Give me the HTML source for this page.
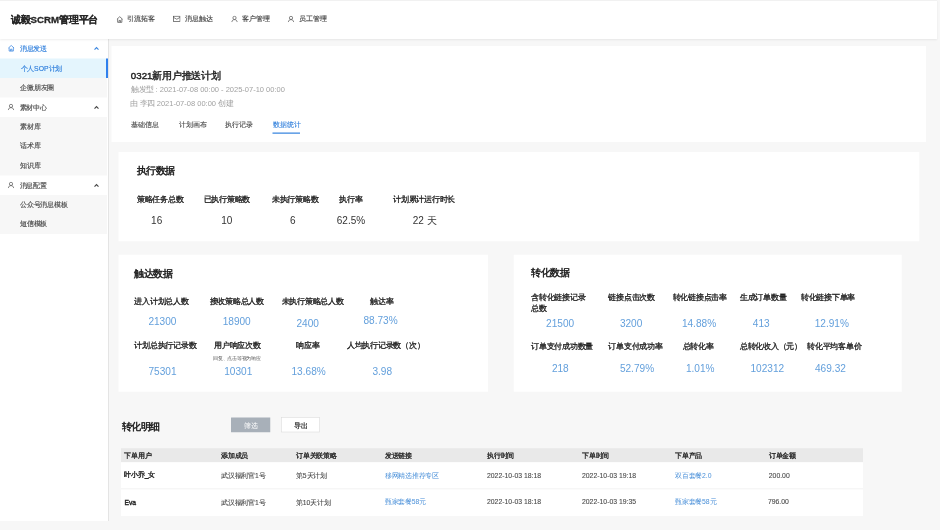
<!DOCTYPE html><html><head><meta charset="utf-8"><style>
*{margin:0;padding:0;box-sizing:border-box}
html,body{width:940px;height:530px;overflow:hidden;background:#f7f7f7}
#root{position:absolute;left:0;top:0;width:3760px;height:2120px;transform:scale(0.25);transform-origin:0 0;font-family:"Liberation Sans",sans-serif}
.r{position:absolute}.t{position:absolute;white-space:nowrap;line-height:1}
</style></head><body><div id="wrap" style="position:absolute;left:0;top:0;width:940px;height:530px;filter:blur(0.3px)"><div id="root">
<div class="r" style="left:0px;top:156px;width:432px;height:1928px;background:#fff"></div>
<div class="r" style="left:432px;top:156px;width:4px;height:1928px;background:#e4e4e4"></div>
<div class="r" style="left:0px;top:234px;width:424px;height:78px;background:#e4f5fd"></div>
<div class="r" style="left:424px;top:234px;width:8px;height:78px;background:#2f80ed"></div>
<div class="r" style="left:0px;top:312px;width:428px;height:78px;background:#f7f7f7"></div>
<div class="r" style="left:0px;top:468px;width:428px;height:234px;background:#f7f7f7"></div>
<div class="r" style="left:0px;top:780px;width:428px;height:156px;background:#f7f7f7"></div>
<div class="r" style="left:0px;top:0px;width:3748px;height:156px;background:#fff;box-shadow:0 4px 8px rgba(0,0,0,0.07)"></div>
<div class="r" style="left:0px;top:0px;width:3748px;height:3px;background:#ececec"></div>
<div class="r" style="left:446px;top:184px;width:3258px;height:384px;background:#fff"></div>
<div class="r" style="left:1090.4px;top:530.4px;width:109.6px;height:4.8px;background:#3a86e0"></div>
<div class="r" style="left:474px;top:608px;width:3202.8px;height:357.2px;background:#fff"></div>
<div class="r" style="left:474px;top:1019.2px;width:1478.4px;height:548px;background:#fff"></div>
<div class="r" style="left:2054.8px;top:1018.8px;width:1552.4px;height:548.4px;background:#fff"></div>
<div class="r" style="left:923.6px;top:1670px;width:157.2px;height:58.8px;background:#a8b0b9;border-radius:1px"></div>
<div class="r" style="left:1124px;top:1668px;width:154.8px;height:60.8px;background:#fff;border:2.4px solid #d6d6d6;border-radius:1px"></div>
<div class="r" style="left:484px;top:1793.2px;width:2968px;height:56px;background:#e9e9e9"></div>
<div class="r" style="left:484px;top:1849.2px;width:2968px;height:214.4px;background:#fff"></div>
<div class="r" style="left:484px;top:1954px;width:2968px;height:3.2px;background:#eee"></div>
<svg class="r" style="left:464px;top:63.2px" width="30" height="30" viewBox="0 0 16 16"><path d="M2 7.5L8 2l6 5.5M3.5 6.5V14h9V6.5M6.5 14v-4h3v4" fill="none" stroke="#555" stroke-width="1.6" stroke-linejoin="round"/></svg>
<svg class="r" style="left:692px;top:62px" width="30" height="30" viewBox="0 0 16 16"><rect x="1" y="1.5" width="14" height="11" fill="none" stroke="#555" stroke-width="1.6"/><path d="M1 4l7 4 7-4" fill="none" stroke="#555" stroke-width="1.6"/></svg>
<svg class="r" style="left:924px;top:62px" width="28" height="28" viewBox="0 0 16 16"><circle cx="8" cy="5.5" r="3.7" fill="none" stroke="#555" stroke-width="1.6"/><path d="M2 15c0-3.6 2.7-5.6 6-5.6s6 2 6 5.6" fill="none" stroke="#555" stroke-width="1.6"/></svg>
<svg class="r" style="left:1150px;top:62px" width="28" height="28" viewBox="0 0 16 16"><circle cx="8" cy="5.5" r="3.7" fill="none" stroke="#555" stroke-width="1.6"/><path d="M2 15c0-3.6 2.7-5.6 6-5.6s6 2 6 5.6" fill="none" stroke="#555" stroke-width="1.6"/></svg>
<svg class="r" style="left:30px;top:178px" width="30" height="30" viewBox="0 0 16 16"><path d="M2 7.5L8 2l6 5.5M3.5 6.5V14h9V6.5M6.5 14v-4h3v4" fill="none" stroke="#3a86e0" stroke-width="1.6" stroke-linejoin="round"/></svg>
<svg class="r" style="left:30px;top:414px" width="28" height="28" viewBox="0 0 16 16"><circle cx="8" cy="5.5" r="3.7" fill="none" stroke="#555" stroke-width="1.6"/><path d="M2 15c0-3.6 2.7-5.6 6-5.6s6 2 6 5.6" fill="none" stroke="#555" stroke-width="1.6"/></svg>
<svg class="r" style="left:30px;top:726px" width="28" height="28" viewBox="0 0 16 16"><circle cx="8" cy="5.5" r="3.7" fill="none" stroke="#555" stroke-width="1.6"/><path d="M2 15c0-3.6 2.7-5.6 6-5.6s6 2 6 5.6" fill="none" stroke="#555" stroke-width="1.6"/></svg>
<svg class="r" style="left:372px;top:180px" width="28" height="28" viewBox="0 0 16 16"><path d="M3.5 10.5L8 6l4.5 4.5" fill="none" stroke="#3a86e0" stroke-width="2.6"/></svg>
<svg class="r" style="left:372px;top:416px" width="28" height="28" viewBox="0 0 16 16"><path d="M3.5 10.5L8 6l4.5 4.5" fill="none" stroke="#444" stroke-width="2.6"/></svg>
<svg class="r" style="left:372px;top:728px" width="28" height="28" viewBox="0 0 16 16"><path d="M3.5 10.5L8 6l4.5 4.5" fill="none" stroke="#444" stroke-width="2.6"/></svg>
<div class="t" id="t0" style="left:44px;top:59px;font-size:38.8px;color:#262626;-webkit-text-stroke:1.2px #262626;font-weight:bold">诚毅SCRM管理平台</div>
<div class="t" id="t1" style="left:507.52px;top:60.2px;font-size:28.4px;color:#4a4a4a;-webkit-text-stroke:0.6px #4a4a4a">引流拓客</div>
<div class="t" id="t2" style="left:739.12px;top:60.2px;font-size:28.4px;color:#4a4a4a;-webkit-text-stroke:0.6px #4a4a4a">消息触达</div>
<div class="t" id="t3" style="left:968px;top:60.2px;font-size:28.4px;color:#4a4a4a;-webkit-text-stroke:0.6px #4a4a4a">客户管理</div>
<div class="t" id="t4" style="left:1196px;top:60.2px;font-size:28.4px;color:#4a4a4a;-webkit-text-stroke:0.6px #4a4a4a">员工管理</div>
<div class="t" id="t5" style="left:79.96px;top:180px;font-size:27.4px;color:#2f7fdc;-webkit-text-stroke:0.6px #2f7fdc">消息发送</div>
<div class="t" id="t6" style="left:82.4px;top:259.8px;font-size:27.4px;color:#2f7fdc;-webkit-text-stroke:0.6px #2f7fdc">个人SOP计划</div>
<div class="t" id="t7" style="left:81.72px;top:336px;font-size:27.4px;color:#4a4a4a;-webkit-text-stroke:0.6px #4a4a4a">企微朋友圈</div>
<div class="t" id="t8" style="left:78.6px;top:415.8px;font-size:27.4px;color:#4a4a4a;-webkit-text-stroke:0.6px #4a4a4a">素材中心</div>
<div class="t" id="t9" style="left:80.16px;top:493.8px;font-size:27.4px;color:#4a4a4a;-webkit-text-stroke:0.6px #4a4a4a">素材库</div>
<div class="t" id="t10" style="left:80.16px;top:570px;font-size:27.4px;color:#4a4a4a;-webkit-text-stroke:0.6px #4a4a4a">话术库</div>
<div class="t" id="t11" style="left:80.16px;top:649.8px;font-size:27.4px;color:#4a4a4a;-webkit-text-stroke:0.6px #4a4a4a">知识库</div>
<div class="t" id="t12" style="left:78.6px;top:727.8px;font-size:27.4px;color:#4a4a4a;-webkit-text-stroke:0.6px #4a4a4a">消息配置</div>
<div class="t" id="t13" style="left:80.16px;top:804px;font-size:27.4px;color:#4a4a4a;-webkit-text-stroke:0.6px #4a4a4a">公众号消息模板</div>
<div class="t" id="t14" style="left:80.16px;top:882px;font-size:27.4px;color:#4a4a4a;-webkit-text-stroke:0.6px #4a4a4a">短信模板</div>
<div class="t" id="t15" style="left:523.32px;top:285.42px;font-size:38.88px;color:#1f1f1f;-webkit-text-stroke:1.68px #1f1f1f">0321新用户推送计划</div>
<div class="t" id="t16" style="left:524px;top:344.48px;font-size:30px;color:#a2a2a2">触发型 : 2021-07-08 00:00 - 2025-07-10 00:00</div>
<div class="t" id="t17" style="left:520.4px;top:397.6px;font-size:30px;color:#a2a2a2">由 李四 2021-07-08 00:00 创建</div>
<div class="t" id="t18" style="left:524px;top:482.64px;font-size:28.4px;color:#4a4a4a;-webkit-text-stroke:0.48px #4a4a4a">基础信息</div>
<div class="t" id="t19" style="left:715.12px;top:482.64px;font-size:28.4px;color:#4a4a4a;-webkit-text-stroke:0.48px #4a4a4a">计划画布</div>
<div class="t" id="t20" style="left:900px;top:482.64px;font-size:28.4px;color:#4a4a4a;-webkit-text-stroke:0.48px #4a4a4a">执行记录</div>
<div class="t" id="t21" style="left:1091.12px;top:482.64px;font-size:28.4px;color:#2f7fdc;-webkit-text-stroke:0.48px #2f7fdc">数据统计</div>
<div class="t" id="t22" style="left:547.32px;top:664.16px;font-size:38.4px;color:#1a1a1a;-webkit-text-stroke:1.8px #1a1a1a">执行数据</div>
<div class="t" id="t23" style="left:547.32px;top:782.32px;font-size:31px;color:#222;-webkit-text-stroke:1.2px #222">策略任务总数</div>
<div class="t" id="t24" style="left:814.24px;top:782.32px;font-size:31px;color:#222;-webkit-text-stroke:1.2px #222">已执行策略数</div>
<div class="t" id="t25" style="left:1087.12px;top:782.32px;font-size:31px;color:#222;-webkit-text-stroke:1.2px #222">未执行策略数</div>
<div class="t" id="t26" style="left:1357.56px;top:782.32px;font-size:31px;color:#222;-webkit-text-stroke:1.2px #222">执行率</div>
<div class="t" id="t27" style="left:1572.88px;top:782.32px;font-size:31px;color:#222;-webkit-text-stroke:1.2px #222">计划累计运行时长</div>
<div class="t" id="t28" style="left:604.4px;top:860.6px;font-size:40px;color:#333">16</div>
<div class="t" id="t29" style="left:884.88px;top:860.6px;font-size:40px;color:#333">10</div>
<div class="t" id="t30" style="left:1160px;top:860.6px;font-size:40px;color:#333">6</div>
<div class="t" id="t31" style="left:1347.12px;top:860.6px;font-size:40px;color:#333">62.5%</div>
<div class="t" id="t32" style="left:1651.12px;top:860.6px;font-size:40px;color:#333">22 天</div>
<div class="t" id="t33" style="left:537.76px;top:1074.8px;font-size:38.4px;color:#1a1a1a;-webkit-text-stroke:1.8px #1a1a1a">触达数据</div>
<div class="t" id="t34" style="left:537.76px;top:1189.64px;font-size:31px;color:#222;-webkit-text-stroke:1.2px #222">进入计划总人数</div>
<div class="t" id="t35" style="left:838.24px;top:1189.64px;font-size:31px;color:#222;-webkit-text-stroke:1.2px #222">接收策略总人数</div>
<div class="t" id="t36" style="left:1126.24px;top:1189.64px;font-size:31px;color:#222;-webkit-text-stroke:1.2px #222">未执行策略总人数</div>
<div class="t" id="t37" style="left:1480.68px;top:1189.64px;font-size:31px;color:#222;-webkit-text-stroke:1.2px #222">触达率</div>
<div class="t" id="t38" style="left:593.56px;top:1265.48px;font-size:40.4px;color:#64a0dc">21300</div>
<div class="t" id="t39" style="left:890.64px;top:1265.48px;font-size:40.4px;color:#64a0dc">18900</div>
<div class="t" id="t40" style="left:1185.76px;top:1272.76px;font-size:40.4px;color:#64a0dc">2400</div>
<div class="t" id="t41" style="left:1453.76px;top:1262.68px;font-size:40.4px;color:#64a0dc">88.73%</div>
<div class="t" id="t42" style="left:537.76px;top:1367.12px;font-size:31px;color:#222;-webkit-text-stroke:1.2px #222">计划总执行记录数</div>
<div class="t" id="t43" style="left:856.68px;top:1364.76px;font-size:31px;color:#222;-webkit-text-stroke:1.2px #222">用户响应次数</div>
<div class="t" id="t44" style="left:852.68px;top:1423.04px;font-size:19.2px;color:#555">回复、点击等视为响应</div>
<div class="t" id="t45" style="left:1184.88px;top:1367.12px;font-size:31px;color:#222;-webkit-text-stroke:1.2px #222">响应率</div>
<div class="t" id="t46" style="left:1387.12px;top:1367.12px;font-size:31px;color:#222;-webkit-text-stroke:1.2px #222">人均执行记录数（次）</div>
<div class="t" id="t47" style="left:593.76px;top:1467.04px;font-size:40.4px;color:#64a0dc">75301</div>
<div class="t" id="t48" style="left:896.88px;top:1467.04px;font-size:40.4px;color:#64a0dc">10301</div>
<div class="t" id="t49" style="left:1165.96px;top:1467.04px;font-size:40.4px;color:#64a0dc">13.68%</div>
<div class="t" id="t50" style="left:1489.56px;top:1467.04px;font-size:40.4px;color:#64a0dc">3.98</div>
<div class="t" id="t51" style="left:2124px;top:1072.16px;font-size:38.4px;color:#1a1a1a;-webkit-text-stroke:1.8px #1a1a1a">转化数据</div>
<div class="t" id="t52" style="left:2124px;top:1175.2px;font-size:31px;color:#222;-webkit-text-stroke:1.2px #222">含转化链接记录</div>
<div class="t" id="t53" style="left:2124px;top:1219.2px;font-size:31px;color:#222;-webkit-text-stroke:1.2px #222">总数</div>
<div class="t" id="t54" style="left:2433.76px;top:1175.2px;font-size:31px;color:#222;-webkit-text-stroke:1.2px #222">链接点击次数</div>
<div class="t" id="t55" style="left:2690.24px;top:1175.2px;font-size:31px;color:#222;-webkit-text-stroke:1.2px #222">转化链接点击率</div>
<div class="t" id="t56" style="left:2959.12px;top:1175.2px;font-size:31px;color:#222;-webkit-text-stroke:1.2px #222">生成订单数量</div>
<div class="t" id="t57" style="left:3203.32px;top:1175.2px;font-size:31px;color:#222;-webkit-text-stroke:1.2px #222">转化链接下单率</div>
<div class="t" id="t58" style="left:2184.2px;top:1272.36px;font-size:40.4px;color:#64a0dc">21500</div>
<div class="t" id="t59" style="left:2479.52px;top:1272.36px;font-size:40.4px;color:#64a0dc">3200</div>
<div class="t" id="t60" style="left:2727.52px;top:1271.56px;font-size:40.4px;color:#64a0dc">14.88%</div>
<div class="t" id="t61" style="left:3011.32px;top:1271.56px;font-size:40.4px;color:#64a0dc">413</div>
<div class="t" id="t62" style="left:3258.64px;top:1271.56px;font-size:40.4px;color:#64a0dc">12.91%</div>
<div class="t" id="t63" style="left:2124px;top:1367.92px;font-size:31px;color:#222;-webkit-text-stroke:1.2px #222">订单支付成功数量</div>
<div class="t" id="t64" style="left:2433.76px;top:1367.92px;font-size:31px;color:#222;-webkit-text-stroke:1.2px #222">订单支付成功率</div>
<div class="t" id="t65" style="left:2730.24px;top:1368.72px;font-size:31px;color:#222;-webkit-text-stroke:1.2px #222">总转化率</div>
<div class="t" id="t66" style="left:2959.12px;top:1368.72px;font-size:31px;color:#222;-webkit-text-stroke:1.2px #222">总转化收入（元）</div>
<div class="t" id="t67" style="left:3228px;top:1368.72px;font-size:31px;color:#222;-webkit-text-stroke:1.2px #222">转化平均客单价</div>
<div class="t" id="t68" style="left:2207.52px;top:1452.6px;font-size:40.4px;color:#64a0dc">218</div>
<div class="t" id="t69" style="left:2479.52px;top:1452.6px;font-size:40.4px;color:#64a0dc">52.79%</div>
<div class="t" id="t70" style="left:2743.52px;top:1452.6px;font-size:40.4px;color:#64a0dc">1.01%</div>
<div class="t" id="t71" style="left:3001.96px;top:1452.6px;font-size:40.4px;color:#64a0dc">102312</div>
<div class="t" id="t72" style="left:3260px;top:1452.6px;font-size:40.4px;color:#64a0dc">469.32</div>
<div class="t" id="t73" style="left:486.44px;top:1685.72px;font-size:38.4px;color:#1a1a1a;-webkit-text-stroke:1.8px #1a1a1a">转化明细</div>
<div class="t" id="t74" style="left:976px;top:1686.16px;font-size:28.8px;color:#fff">筛选</div>
<div class="t" id="t75" style="left:1175.12px;top:1686.16px;font-size:28.8px;color:#262626;-webkit-text-stroke:0.8px #262626">导出</div>
<div class="t" id="t76" style="left:497.56px;top:1810.16px;font-size:27px;color:#262626;-webkit-text-stroke:1.2px #262626">下单用户</div>
<div class="t" id="t77" style="left:884.88px;top:1810.16px;font-size:27px;color:#262626;-webkit-text-stroke:1.2px #262626">添加成员</div>
<div class="t" id="t78" style="left:1184px;top:1810.16px;font-size:27px;color:#262626;-webkit-text-stroke:1.2px #262626">订单关联策略</div>
<div class="t" id="t79" style="left:1539.12px;top:1810.16px;font-size:27px;color:#262626;-webkit-text-stroke:1.2px #262626">发送链接</div>
<div class="t" id="t80" style="left:1948px;top:1810.16px;font-size:27px;color:#262626;-webkit-text-stroke:1.2px #262626">执行时间</div>
<div class="t" id="t81" style="left:2328px;top:1810.16px;font-size:27px;color:#262626;-webkit-text-stroke:1.2px #262626">下单时间</div>
<div class="t" id="t82" style="left:2700.2px;top:1810.16px;font-size:27px;color:#262626;-webkit-text-stroke:1.2px #262626">下单产品</div>
<div class="t" id="t83" style="left:3075.32px;top:1810.16px;font-size:27px;color:#262626;-webkit-text-stroke:1.2px #262626">订单金额</div>
<div class="t" id="t84" style="left:497.56px;top:1887px;font-size:27px;color:#262626;-webkit-text-stroke:1.52px #262626">叶小乔_女</div>
<div class="t" id="t85" style="left:884.88px;top:1890.16px;font-size:27px;color:#4a4a4a;-webkit-text-stroke:0.4px #4a4a4a">武汉福利官1号</div>
<div class="t" id="t86" style="left:1184px;top:1890.16px;font-size:27px;color:#4a4a4a;-webkit-text-stroke:0.4px #4a4a4a">第5天计划</div>
<div class="t" id="t87" style="left:1539.12px;top:1887.24px;font-size:27.32px;color:#4a90d9">移网精选推荐专区</div>
<div class="t" id="t88" style="left:1948px;top:1887.74px;font-size:27.4px;color:#4a4a4a;-webkit-text-stroke:0.4px #4a4a4a">2022-10-03 18:18</div>
<div class="t" id="t89" style="left:2328px;top:1887.74px;font-size:27.4px;color:#4a4a4a;-webkit-text-stroke:0.4px #4a4a4a">2022-10-03 19:18</div>
<div class="t" id="t90" style="left:2700.2px;top:1887.24px;font-size:27.32px;color:#4a90d9">双百套餐2.0</div>
<div class="t" id="t91" style="left:3075.12px;top:1887.74px;font-size:27.4px;color:#4a4a4a;-webkit-text-stroke:0.4px #4a4a4a">200.00</div>
<div class="t" id="t92" style="left:497.56px;top:1995.72px;font-size:27px;color:#262626;-webkit-text-stroke:1.52px #262626">Eva</div>
<div class="t" id="t93" style="left:884.88px;top:1995.72px;font-size:27px;color:#4a4a4a;-webkit-text-stroke:0.4px #4a4a4a">武汉福利官1号</div>
<div class="t" id="t94" style="left:1184px;top:1995.72px;font-size:27px;color:#4a4a4a;-webkit-text-stroke:0.4px #4a4a4a">第10天计划</div>
<div class="t" id="t95" style="left:1539.12px;top:1992.12px;font-size:27.32px;color:#4a90d9">甄家套餐58元</div>
<div class="t" id="t96" style="left:1948px;top:1992.62px;font-size:27.4px;color:#4a4a4a;-webkit-text-stroke:0.4px #4a4a4a">2022-10-03 18:18</div>
<div class="t" id="t97" style="left:2328px;top:1992.62px;font-size:27.4px;color:#4a4a4a;-webkit-text-stroke:0.4px #4a4a4a">2022-10-03 19:35</div>
<div class="t" id="t98" style="left:2700.2px;top:1992.12px;font-size:27.32px;color:#4a90d9">甄家套餐58元</div>
<div class="t" id="t99" style="left:3071.52px;top:1992.62px;font-size:27.4px;color:#4a4a4a;-webkit-text-stroke:0.4px #4a4a4a">796.00</div>
</div></div></body></html>
